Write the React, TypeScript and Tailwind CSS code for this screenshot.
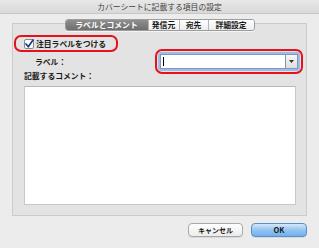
import React from "react";

export default function App() {
  return (
    <div className="w-[319px] h-[248px] bg-[#ececec] flex flex-col font-['Noto_Sans_CJK_JP',sans-serif] text-[#1a1a1a] overflow-hidden">
      <div className="h-[14px] shrink-0 flex items-center justify-center text-[7.8px] leading-none text-[#3f3f3f] bg-gradient-to-b from-[#e8e8e8] to-[#d9d9d9] border-b border-[#c6c6c6]">
        カバーシートに記載する項目の設定
      </div>

      <div className="relative z-10 mt-[5px] flex justify-center">
        <div className="flex h-[12px] rounded-[3px] border border-[#9c9c9c] overflow-hidden text-[7.8px] leading-none font-semibold shadow-[0_1px_0_rgba(255,255,255,0.6)]">
          <div className="w-[82px] flex items-center justify-center text-white bg-gradient-to-b from-[#8f8f8f] to-[#6e6e6e]">
            ラベルとコメント
          </div>
          <div className="w-[31px] flex items-center justify-center bg-gradient-to-b from-white to-[#ededed] border-l border-[#b5b5b5]">
            発信元
          </div>
          <div className="w-[29px] flex items-center justify-center bg-gradient-to-b from-white to-[#ededed] border-l border-[#b5b5b5]">
            宛先
          </div>
          <div className="w-[46px] flex items-center justify-center bg-gradient-to-b from-white to-[#ededed] border-l border-[#b5b5b5]">
            詳細設定
          </div>
        </div>
      </div>

      <div className="mx-[12px] -mt-[8px] h-[193px] shrink-0 bg-[#e3e3e3] border border-[#cbcbcb] flex flex-col">
        <div className="ml-[1px] mt-[11px] w-[104px] h-[17px] border-2 border-[#e8101c] rounded-[7px] flex items-center pl-[8px] gap-[2px]">
          <svg width="10" height="10" viewBox="0 0 10 10" className="shrink-0">
            <rect x="0.5" y="0.5" width="9" height="9" rx="1.5" fill="#ffffff" stroke="#8a8a8a" />
            <path d="M2 5 L4.3 7.8 L9 1" fill="none" stroke="#1b3f8f" strokeWidth="1.7" strokeLinecap="round" strokeLinejoin="round" />
          </svg>
          <span className="text-[7.8px] leading-none font-semibold whitespace-nowrap">注目ラベルをつける</span>
        </div>

        <div className="-mt-[3px] h-[25px] flex items-center">
          <span className="ml-[22px] text-[7.8px] leading-none font-semibold whitespace-nowrap">ラベル：</span>
          <div className="ml-auto mr-[3px] w-[148px] h-[25px] border-2 border-[#e8101c] rounded-[7px] p-[1px] flex">
            <div className="flex-1 rounded-[3px] border-2 border-[#9dbde6] flex bg-white">
              <div className="flex-1 border border-[#7f98b8] flex items-center pl-[2px]">
                <div className="w-[1px] h-[9px] bg-black" />
              </div>
              <div className="w-[12px] border-y border-r border-[#7f98b8] bg-gradient-to-b from-[#f7f7f7] to-[#dedede] flex items-center justify-center">
                <svg width="5" height="3" viewBox="0 0 5 3">
                  <path d="M0 0 L5 0 L2.5 3 Z" fill="#333" />
                </svg>
              </div>
            </div>
          </div>
        </div>

        <div className="-mt-[3px] ml-[11px] h-[10px] flex items-center text-[7.8px] leading-none font-semibold whitespace-nowrap">
          記載するコメント：
        </div>

        <div className="mt-[5px] ml-[11px] mr-[10px] h-[119px] bg-white border border-[#c9c9c9] border-t-[#b8b8b8]" />
      </div>

      <div className="mt-[7px] flex justify-end pr-[12px] gap-[8px]">
        <div className="w-[55px] h-[14px] rounded-[4px] border border-[#a8a8a8] bg-gradient-to-b from-white to-[#ececec] flex items-center justify-center text-[7px] leading-none font-bold shadow-[0_1px_0_rgba(0,0,0,0.08)]">
          キャンセル
        </div>
        <div className="w-[56px] h-[14px] rounded-[4px] border border-[#5b8ec8] bg-gradient-to-b from-[#d4e8fb] via-[#93c4f1] to-[#6fb1ef] flex items-center justify-center text-[7.5px] leading-none font-bold shadow-[0_1px_0_rgba(0,0,0,0.08)]">
          OK
        </div>
      </div>
    </div>
  );
}
